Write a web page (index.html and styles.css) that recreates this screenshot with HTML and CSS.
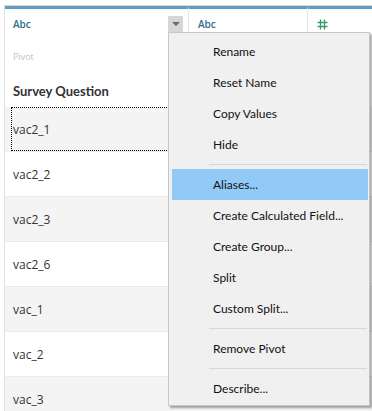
FILE: index.html
```html
<!DOCTYPE html>
<html lang="en">
<head>
  <meta charset="utf-8">
  <title>Pivot field menu</title>
  <link rel="stylesheet" href="styles.css">
</head>
<body>
  <div class="sheet">
    <div class="head">
      <div class="col col-first">
        <div class="type-row">
          <span class="type">Abc</span>
          <span class="drop-btn"><span class="tri"></span></span>
        </div>
        <div class="pivot-row">Pivot</div>
        <div class="name-row">Survey Question</div>
      </div>
      <div class="col">
        <div class="type-row"><span class="type">Abc</span></div>
      </div>
      <div class="col">
        <div class="type-row">
          <svg class="num" width="11" height="11" viewBox="0 0 11 11">
            <path d="M3.5 0.5V10.5M7.5 0.5V10.5M0.5 3.5H10.5M0.5 7.5H10.5" stroke="#3c9a6b" stroke-width="1.3" fill="none"/>
          </svg>
        </div>
      </div>
    </div>

    <div class="rows">
      <div class="row alt"><div class="cell focus">vac2_1</div></div>
      <div class="row"><div class="cell">vac2_2</div></div>
      <div class="row alt"><div class="cell">vac2_3</div></div>
      <div class="row"><div class="cell">vac2_6</div></div>
      <div class="row alt"><div class="cell">vac_1</div></div>
      <div class="row"><div class="cell">vac_2</div></div>
      <div class="row alt"><div class="cell">vac_3</div></div>
    </div>
  </div>

  <div class="menu">
    <div class="menu-item">Rename</div>
    <div class="menu-item">Reset Name</div>
    <div class="menu-item">Copy Values</div>
    <div class="menu-item">Hide</div>
    <div class="menu-sep"></div>
    <div class="menu-item active">Aliases...</div>
    <div class="menu-item">Create Calculated Field...</div>
    <div class="menu-item">Create Group...</div>
    <div class="menu-item">Split</div>
    <div class="menu-item">Custom Split...</div>
    <div class="menu-sep"></div>
    <div class="menu-item">Remove Pivot</div>
    <div class="menu-sep"></div>
    <div class="menu-item">Describe...</div>
  </div>
</body>
</html>
```

FILE: styles.css
```css
body {
  margin: 0;
  width: 372px;
  height: 411px;
  overflow: hidden;
  background: #fff;
  font-family: 'Open Sans', 'Noto Sans', sans-serif;
  position: relative;
}

.sheet {
  margin: 5px 0 0 4px;
  border-left: 1px solid #e0e0e0;
  border-top: 1px solid #d9d9d9;
  height: 406px;
}

.head {
  display: grid;
  grid-template-columns: 184px 119px 1fr;
}

.col {
  border-top: 3px solid #5d9cc6;
  border-left: 1px solid #e6e6e6;
}

.col-first {
  border-left: none;
}

.col + .col {
  margin-left: -1px;
}

.type-row {
  height: 30px;
  display: flex;
  align-items: center;
  justify-content: space-between;
  padding: 0 6px 0 8px;
}

.col + .col .type-row {
  padding-left: 9px;
}

.type {
  font-size: 10px;
  color: #2f6f90;
  font-weight: 600;
}

.drop-btn {
  width: 15px;
  height: 16px;
  background: #d6d6d6;
  display: flex;
  align-items: center;
  justify-content: center;
}

.tri {
  width: 0;
  height: 0;
  border-left: 4px solid transparent;
  border-right: 4px solid transparent;
  border-top: 4px solid #6a6a6a;
}

.pivot-row {
  height: 36px;
  line-height: 36px;
  padding-left: 8px;
  font-size: 9px;
  color: #b9c0cc;
}

.name-row {
  height: 32px;
  line-height: 33px;
  padding-left: 8px;
  font-family: 'Lato', 'Noto Sans', sans-serif;
  font-size: 13px;
  font-weight: bold;
  color: #333;
}

.row {
  height: 44px;
  border-bottom: 1px solid #ebebeb;
  background: #fff;
}

.row.alt {
  background: #f4f4f4;
}

.cell {
  width: 178px;
  height: 44px;
  line-height: 46px;
  margin-left: 6px;
  padding-left: 2px;
  font-size: 12px;
  color: #333;
  box-sizing: border-box;
}

.cell.focus {
  border: 1px dotted #000;
  line-height: 44px;
  padding-left: 1px;
}

.menu {
  position: absolute;
  left: 168px;
  top: 32px;
  width: 196px;
  padding: 3px 1px 1px 3px;
  background: #f0f0f0;
  border: 1px solid #c8c8c8;
  box-shadow: 2px 2px 2px rgba(0, 0, 0, 0.35);
  font-family: 'Lato', 'Noto Sans', sans-serif;
  font-size: 12px;
  color: #111;
}

.menu-item {
  height: 31px;
  line-height: 31px;
  padding-left: 41px;
}

.menu-item.active {
  background: #91c9f7;
}

.menu-sep {
  height: 1px;
  background: #d7d7d7;
  margin: 4px 1px 4px 37px;
}
```
